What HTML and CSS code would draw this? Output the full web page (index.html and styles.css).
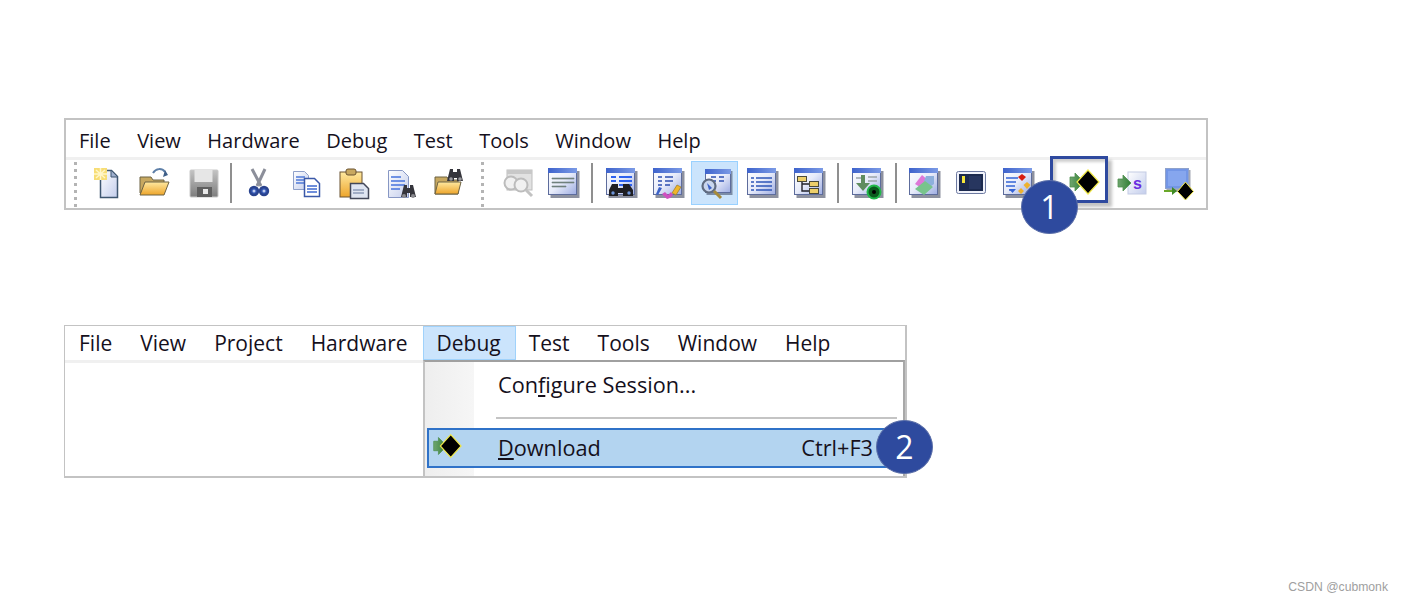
FILE: index.html
```html
<!DOCTYPE html>
<html lang="en">
<head>
<meta charset="utf-8">
<title>Keil toolbar and Debug menu</title>
<link rel="stylesheet" href="styles.css">
</head>
<body>
<svg class="defs" width="0" height="0" aria-hidden="true">
  <defs>
    <linearGradient id="gBody" x1="0" y1="0" x2="1" y2="1"><stop offset="0" stop-color="#ffffff"/><stop offset=".5" stop-color="#e8ecfa"/><stop offset="1" stop-color="#9dacE2"/></linearGradient>
    <linearGradient id="gTitle" x1="0" y1="0" x2="1" y2="0"><stop offset="0" stop-color="#3e63cc"/><stop offset="1" stop-color="#7c9be6"/></linearGradient>
    <linearGradient id="gPage" x1="0" y1="0" x2="1" y2="1"><stop offset="0" stop-color="#ffffff"/><stop offset="1" stop-color="#c3cdec"/></linearGradient>
    <linearGradient id="gFolder" x1="0" y1="0" x2="0" y2="1"><stop offset="0" stop-color="#ffe9a0"/><stop offset="1" stop-color="#eda52b"/></linearGradient>
    <linearGradient id="gGrey" x1="0" y1="0" x2="0" y2="1"><stop offset="0" stop-color="#c4c4c4"/><stop offset="1" stop-color="#7d7d7d"/></linearGradient>
    <linearGradient id="gArrow" x1="0" y1="0" x2="1" y2="0"><stop offset="0" stop-color="#6fa56f"/><stop offset="1" stop-color="#2f7d34"/></linearGradient>

    <symbol id="win" viewBox="0 0 36 36">
      <rect x="5.500" y="6" width="29" height="27" fill="#1c2440" opacity=".5"/>
      <rect x="3.500" y="3.500" width="28" height="26" fill="url(#gBody)" stroke="#5d6c9c"/>
      <rect x="3" y="3" width="29" height="5" fill="url(#gTitle)"/>
    </symbol>

    <symbol id="diamond" viewBox="0 0 36 36">
      <path d="M5 13h5V9l9 9-9 9v-4H5z" fill="url(#gArrow)" stroke="#4f8f4f" stroke-width=".8"/>
      <path d="M23 6l11 12-11 12-11-12z" fill="#000" stroke="#f2ea4a" stroke-width="1.200"/>
    </symbol>
  </defs>
</svg>

<main class="page">
  <section class="panel panel-toolbar">
    <nav class="menubar menubar-a">
      <span>File</span><span>View</span><span>Hardware</span><span>Debug</span><span>Test</span><span>Tools</span><span>Window</span><span>Help</span>
    </nav>
    <div class="toolbar">
      <span class="grip"></span>
      <div class="group group-file">
        <span class="tool"><svg viewBox="0 0 36 36"><path d="M12.500 5.500h11l6 6v21h-17z" fill="url(#gPage)" stroke="#3e5670" stroke-width="1.500"/><path d="M23 6v6h6" fill="#9fb0d0" stroke="#3e5670"/><rect x="6" y="3" width="13" height="12" fill="#f7dd75"/><path d="M12.500 3v12M6 9h13M8 5l9 8M17 5l-9 8" stroke="#fff6c9" stroke-width="1.500"/></svg></span>
        <span class="tool"><svg viewBox="0 0 36 36"><path d="M3 12h11l2 3h11v13H3z" fill="#c7a860" stroke="#6d6243"/><path d="M8 17h24l-5 13H3z" fill="url(#gFolder)" stroke="#6d6243"/><path d="M16 8c3-5 9-5 12-1" fill="none" stroke="#5d7fa8" stroke-width="2"/><path d="M26 12l5-2-3-5z" fill="#3f5f88"/></svg></span>
        <span class="tool"><svg viewBox="0 0 36 36"><rect x="4" y="5" width="28" height="27" rx="1" fill="url(#gGrey)" stroke="#c8c8c8"/><rect x="8.500" y="5" width="18" height="12" fill="#e6e6e6"/><rect x="11" y="22" width="15" height="10" fill="#5f5f5f"/><rect x="17" y="24" width="5" height="5" fill="#e8e8e8"/></svg></span>
      </div>
      <span class="sep sep-first"></span>
      <div class="group group-edit">
        <span class="tool"><svg viewBox="0 0 36 36"><path d="M11 4l9 17M24 4l-8 17" stroke="#8c8f9a" stroke-width="3"/><circle cx="13" cy="26" r="4" fill="#3559b5" stroke="#29438f" stroke-width="2.400"/><circle cx="23" cy="26" r="4" fill="#3559b5" stroke="#29438f" stroke-width="2.400"/><circle cx="13" cy="26" r="1.500" fill="#c0cdf0"/><circle cx="23" cy="26" r="1.500" fill="#c0cdf0"/></svg></span>
        <span class="tool"><svg viewBox="0 0 36 36"><path d="M5.500 6.500h11l4 4v14h-15z" fill="url(#gPage)" stroke="#8fa0c9"/><path d="M8 12h9M8 15h9M8 18h9" stroke="#4f79d8" stroke-width="1.500"/><path d="M16.500 13.500h10l5 5v13h-15z" fill="#fff" stroke="#3a58a8" stroke-width="1.500"/><path d="M19 21h10M19 24h10M19 27h10" stroke="#3f6ad0" stroke-width="1.500"/></svg></span>
        <span class="tool"><svg viewBox="0 0 36 36"><rect x="4" y="7" width="22" height="25" fill="url(#gFolder)" stroke="#6b5330"/><rect x="10" y="4" width="10" height="6" rx="2" fill="#c8a860" stroke="#6b5330"/><path d="M14.500 18.500h13l5 5v10h-18z" fill="#dfe5f2" stroke="#43485a" stroke-width="1.500"/><path d="M17 25h11M17 28h11" stroke="#8d9ab8" stroke-width="1.500"/></svg></span>
        <span class="tool"><svg viewBox="0 0 36 36"><path d="M5.500 5.500h14l6 6v21h-20z" fill="url(#gPage)" stroke="#8797c4"/><path d="M8 12h10M8 16h14M8 20h14M8 24h9" stroke="#4573dd" stroke-width="1.600"/><path d="M21 20h3v3h3v-3h3l3 12h-6v-4h-3v4h-6z" fill="#35353c"/><circle cx="21" cy="31" r="2" fill="#8a8a8f"/><circle cx="30" cy="31" r="2" fill="#8a8a8f"/></svg></span>
        <span class="tool"><svg viewBox="0 0 36 36"><path d="M4 12h12l2 3h9v14H4z" fill="#c7a860" stroke="#6d6243"/><path d="M7 17h23l-3 12H4z" fill="url(#gFolder)" stroke="#6d6243"/><path d="M19 4h3v3h4V4h3l3 12h-6v-3h-3v3h-7z" fill="#35353c"/><circle cx="20" cy="14" r="1.800" fill="#9a9a9f"/><circle cx="29" cy="14" r="1.800" fill="#9a9a9f"/></svg></span>
      </div>
      <span class="grip grip-mid"></span>
      <div class="group group-view">
        <span class="tool"><svg viewBox="0 0 36 36"><rect x="8" y="5" width="25" height="20" fill="#e2e2e2" stroke="#bdbdbd"/><rect x="8" y="5" width="25" height="4" fill="#c8c8c8"/><circle cx="12" cy="18" r="6.500" fill="#f1f1f1" stroke="#bcbcbc" stroke-width="2"/><circle cx="22" cy="20" r="6.500" fill="#f1f1f1" stroke="#bcbcbc" stroke-width="2"/><path d="M27 25l6 6" stroke="#c2c2c2" stroke-width="3"/></svg></span>
        <span class="tool"><svg viewBox="0 0 36 36"><use href="#win"/><path d="M7 13h22v1H7zM7 17h22v1H7zM7 21h14v1H7z" fill="#70807e" stroke="#70807e" stroke-width=".6"/></svg></span>
      </div>
      <span class="sep"></span>
      <div class="group">
        <span class="tool"><svg viewBox="0 0 36 36"><use href="#win"/><path d="M8 12h5M16 12h13M8 16h5M16 16h13M16 20h13" stroke="#2e62ee" stroke-width="1.800"/><path d="M6 25l3-6h6v4h5v-4h6l4 6v6h-10v-3h-5v3H6z" fill="#1f1f23"/><circle cx="10" cy="28" r="1.700" fill="#6e95d8"/><circle cx="26" cy="28" r="1.700" fill="#6e95d8"/></svg></span>
        <span class="tool"><svg viewBox="0 0 36 36"><use href="#win"/><path d="M8 12h4M15 12h8M8 16h4M15 16h8M8 20h4M15 20h5" stroke="#2e4fb0" stroke-width="1.500"/><path d="M6 29l3-7 3 1-4 7z" fill="#3b62c8"/><path d="M17 34l-5-5 3-2 3 3 3-3 2 3-3 3z" fill="#d04fc0"/><path d="M22 28l5-8 4 2-5 8z" fill="#f0b52a" stroke="#9a7a22" stroke-width=".7"/></svg></span>
        <span class="tool tool-active"><svg viewBox="0 0 36 36"><rect x="9.500" y="6" width="26" height="24" fill="#1c2440" opacity=".45"/><rect x="8.500" y="4.500" width="25" height="23" fill="url(#gBody)" stroke="#5d6c9c"/><rect x="8" y="4" width="26" height="5" fill="url(#gTitle)"/><path d="M14 12h5M22 12h5M14 16h5M22 16h5" stroke="#2e4fb0" stroke-width="1.500"/><circle cx="12" cy="21" r="6.500" fill="#c9d6ee" stroke="#5f6b80" stroke-width="2.200"/><path d="M10 18l5 5-3 2z" fill="#3b62c8"/><path d="M17 26l7 7" stroke="#a58a3a" stroke-width="3"/></svg></span>
        <span class="tool"><svg viewBox="0 0 36 36"><use href="#win"/><path d="M7 13h3M12 13h16M7 17h3M12 17h16M7 21h3M12 21h16M7 25h3M12 25h16" stroke="#2e55b8" stroke-width="1.700"/></svg></span>
        <span class="tool"><svg viewBox="0 0 36 36"><use href="#win"/><rect x="6.500" y="11.500" width="9" height="5" fill="#edcf6a" stroke="#4a4a3a"/><rect x="18.500" y="16.500" width="9" height="5" fill="#edcf6a" stroke="#4a4a3a"/><rect x="18.500" y="23.500" width="9" height="5" fill="#edcf6a" stroke="#4a4a3a"/><path d="M11 17v9h7M11 19h7" fill="none" stroke="#22222a" stroke-width="1.400"/></svg></span>
      </div>
      <span class="sep"></span>
      <div class="group">
        <span class="tool"><svg viewBox="0 0 36 36"><use href="#win"/><path d="M7 13h8M19 12h9M19 16h9" stroke="#9aa4a8" stroke-width="1.500"/><path d="M12 10h4v8h5l-7 8-7-8h5z" fill="#5f8c5f"/><circle cx="25" cy="27" r="6.500" fill="#0a5c1e" stroke="#22b84a" stroke-width="2"/><circle cx="25" cy="27" r="2" fill="#000"/></svg></span>
      </div>
      <span class="sep sep-last"></span>
      <div class="group">
        <span class="tool"><svg viewBox="0 0 36 36"><use href="#win"/><path d="M9 19l7-9 7 6-6 8z" fill="#de78d8"/><path d="M20 11h8v8l-4 3-6-6z" fill="#8db0dc"/><path d="M9 24l10-8 8 6-9 8z" fill="#78c48c"/></svg></span>
        <span class="tool"><svg viewBox="0 0 36 36"><rect x="3.500" y="6.500" width="29" height="22" rx="2" fill="#f0f2fa" stroke="#6c79a0"/><rect x="6" y="9" width="24" height="17" fill="#1c2a4e"/><rect x="9" y="11" width="3" height="7" fill="#f4e53a"/><rect x="16" y="11" width="12" height="13" fill="#27365f"/></svg></span>
        <span class="tool"><svg viewBox="0 0 36 36"><use href="#win"/><path d="M6 13h12M6 17h10M6 21h9M9 25h5" stroke="#3564d6" stroke-width="1.600"/><path d="M22 9l4 3-4 4-4-4z" fill="#d81c10"/><path d="M27 17l3.500 3-3.500 4-3.500-4zM21 23l3 3-3 3-3-3z" fill="#eeb22e"/><path d="M9 24h7l-3.500 4z" fill="#3564d6"/></svg></span>
      </div>
      <span class="tool tool-boxed"><svg viewBox="0 0 36 36"><use href="#diamond"/></svg></span>
      <span class="tool"><svg viewBox="0 0 36 36"><rect x="14" y="7" width="18" height="22" fill="url(#gPage)" stroke="#c3cbe4"/><path d="M4 14h5v-4l8 8-8 8v-4H4z" fill="url(#gArrow)" stroke="#4f8f4f" stroke-width=".8"/><text class="icon-s" x="19" y="24">s</text></svg></span>
      <span class="tool"><svg viewBox="0 0 36 36"><rect x="5.500" y="5" width="24" height="22" fill="#1c2440" opacity=".4"/><rect x="4.500" y="3.500" width="23" height="20" fill="#7396e6" stroke="#8fa2cc"/><rect x="7" y="6" width="18" height="15" fill="#86a6ee"/><path d="M3 26h10" stroke="#6aa82a" stroke-width="2"/><path d="M11 22l5 4-5 4z" fill="#3e8a24"/><path d="M24.500 17l8 9.500-8 8.500-8-8.500z" fill="#000" stroke="#f2ea4a"/></svg></span>
      <span class="badge badge-one">1</span>
    </div>
  </section>

  <section class="panel panel-menu">
    <nav class="menubar menubar-b">
      <span>File</span><span>View</span><span>Project</span><span>Hardware</span><span class="menu-open">Debug</span><span>Test</span><span>Tools</span><span>Window</span><span>Help</span>
    </nav>
    <div class="menu-band"></div>
    <div class="dropdown">
      <div class="dd-item dd-config"><span class="dd-label">Con<u>f</u>igure Session...</span></div>
      <div class="dd-sep"></div>
      <div class="dd-item dd-download">
        <svg class="dd-icon" viewBox="0 0 36 36"><use href="#diamond"/></svg>
        <span class="dd-label"><u>D</u>ownload</span>
        <span class="dd-key">Ctrl+F3</span>
      </div>
      <span class="badge badge-two">2</span>
    </div>
  </section>
</main>
<footer class="watermark">CSDN @cubmonk</footer>
</body>
</html>
```
FILE: styles.css
```css
* { box-sizing: border-box; }
html, body { margin: 0; padding: 0; }
body {
  width: 1403px;
  height: 601px;
  background: #fff;
  font-family: "Open Sans", "Liberation Sans", sans-serif;
  font-variant-ligatures: none;
  color: #15101c;
  overflow: hidden;
  position: relative;
}
.defs { position: absolute; }
.page {
  display: flex;
  flex-direction: column;
  align-items: flex-start;
  gap: 115px;
  padding: 118px 0 0 64px;
}
.panel {
  position: relative;
  border: 2px solid #c3c3c3;
  background: #fff;
}
.panel-toolbar { width: 1144px; height: 92px; }
.panel-menu { width: 843px; height: 153px; border-width: 1px 2px 2px 1px; }

.menubar { display: flex; align-items: center; }
.menubar-a {
  height: 40px;
  gap: 26.500px;
  padding: 4px 0 0 13px;
  font-size: 20px;
  border-bottom: 3px solid #f0f0f0;
}
.menubar-b {
  height: 34px;
  gap: 28px;
  padding-left: 14px;
  font-size: 21px;
}
.menubar-b .menu-open {
  height: 34px;
  margin: 0 -15px 0 -13px;
  padding: 0 14px 0 13px;
  display: flex;
  align-items: center;
  background: #cbe4fc;
  border: 1px solid #a0d2fb;
}

.toolbar {
  position: relative;
  display: flex;
  align-items: center;
  height: 48px;
  padding: 0 0 3px 8px;
}
.grip {
  width: 3px;
  height: 45px;
  flex: none;
  margin-top: 3px;
  background: repeating-linear-gradient(to bottom, #b4b4b4 0 3px, transparent 3px 7px);
}
.grip-mid { margin: 3px 10px 0 9px; }
.group { display: flex; flex: none; }
.group-file { gap: 2px; margin-left: 5px; }
.group-edit { gap: .5px; }
.group-view .tool { width: 46px; }
.sep {
  width: 2px;
  height: 40px;
  flex: none;
  margin: 0 4px 0 5px;
  background: #8f8f8f;
}
.sep-first { margin: 0 3px; }
.sep-last { margin: 0 3px 0 5px; }
.tool {
  width: 47px;
  height: 44px;
  flex: none;
  display: flex;
  align-items: center;
  justify-content: center;
  border: 1px solid transparent;
}
.tool svg { width: 36px; height: 36px; display: block; }
.tool-active { background: #cbe4fc; border-color: #99d1ff; }
.tool-boxed {
  width: 58px;
  height: 47px;
  margin: -6px 0 0 9px;
  padding: 4px 0 0 8px;
  border: 3px solid #2f4a9f;
  box-shadow: inset 3px 3px 3px #cfcfcf, 4px 4px 3px #c4c4c4;
}
.icon-s {
  font-family: "Liberation Sans", sans-serif;
  font-size: 16px;
  font-weight: 700;
  fill: #6a2de0;
}

.badge {
  position: absolute;
  width: 57px;
  height: 54px;
  border-radius: 50%;
  background: #2e4a9e;
  border: 1px solid #5a6ea8;
  color: #fff;
  font-size: 32px;
  line-height: 52px;
  text-align: center;
}
.badge-one { left: 955px; top: 20px; }
.badge-two { left: 451px; top: 58px; }

.menu-band { height: 3px; width: 358px; background: #f0f0f0; }
.dropdown {
  position: absolute;
  left: 358px;
  top: 34px;
  width: 482px;
  height: 116px;
  border-left: 2px solid #c3c3c3;
  border-top: 2px solid #a0a0a0;
  border-right: 2px solid #a8a8a8;
  background: linear-gradient(to right, #eeeeee 0, #f6f6f6 49px, #fff 49px);
  display: flex;
  flex-direction: column;
  font-size: 21.700px;
}
.dd-item { display: flex; align-items: center; }
.dd-config { height: 46px; padding: 0 0 2px 73px; }
.dd-sep { height: 2px; margin: 9px 6px 0 71px; background: #c4c4c4; }
.dd-download {
  height: 40px;
  margin: 9px -2px 0 2px;
  padding-bottom: 2px;
  background: #b3d4f0;
  border: 2px solid #2f72c8;
}
.dd-icon { width: 34px; height: 34px; flex: none; margin-bottom: 2px; }
.dd-label { white-space: nowrap; }
.dd-download .dd-label { margin-left: 35px; }
.dd-key { margin-left: auto; margin-right: 30px; }

.watermark {
  position: absolute;
  right: 15px;
  bottom: 7px;
  font-size: 12.200px;
  color: #a0a0a0;
  font-family: "Liberation Sans", sans-serif;
}
```
